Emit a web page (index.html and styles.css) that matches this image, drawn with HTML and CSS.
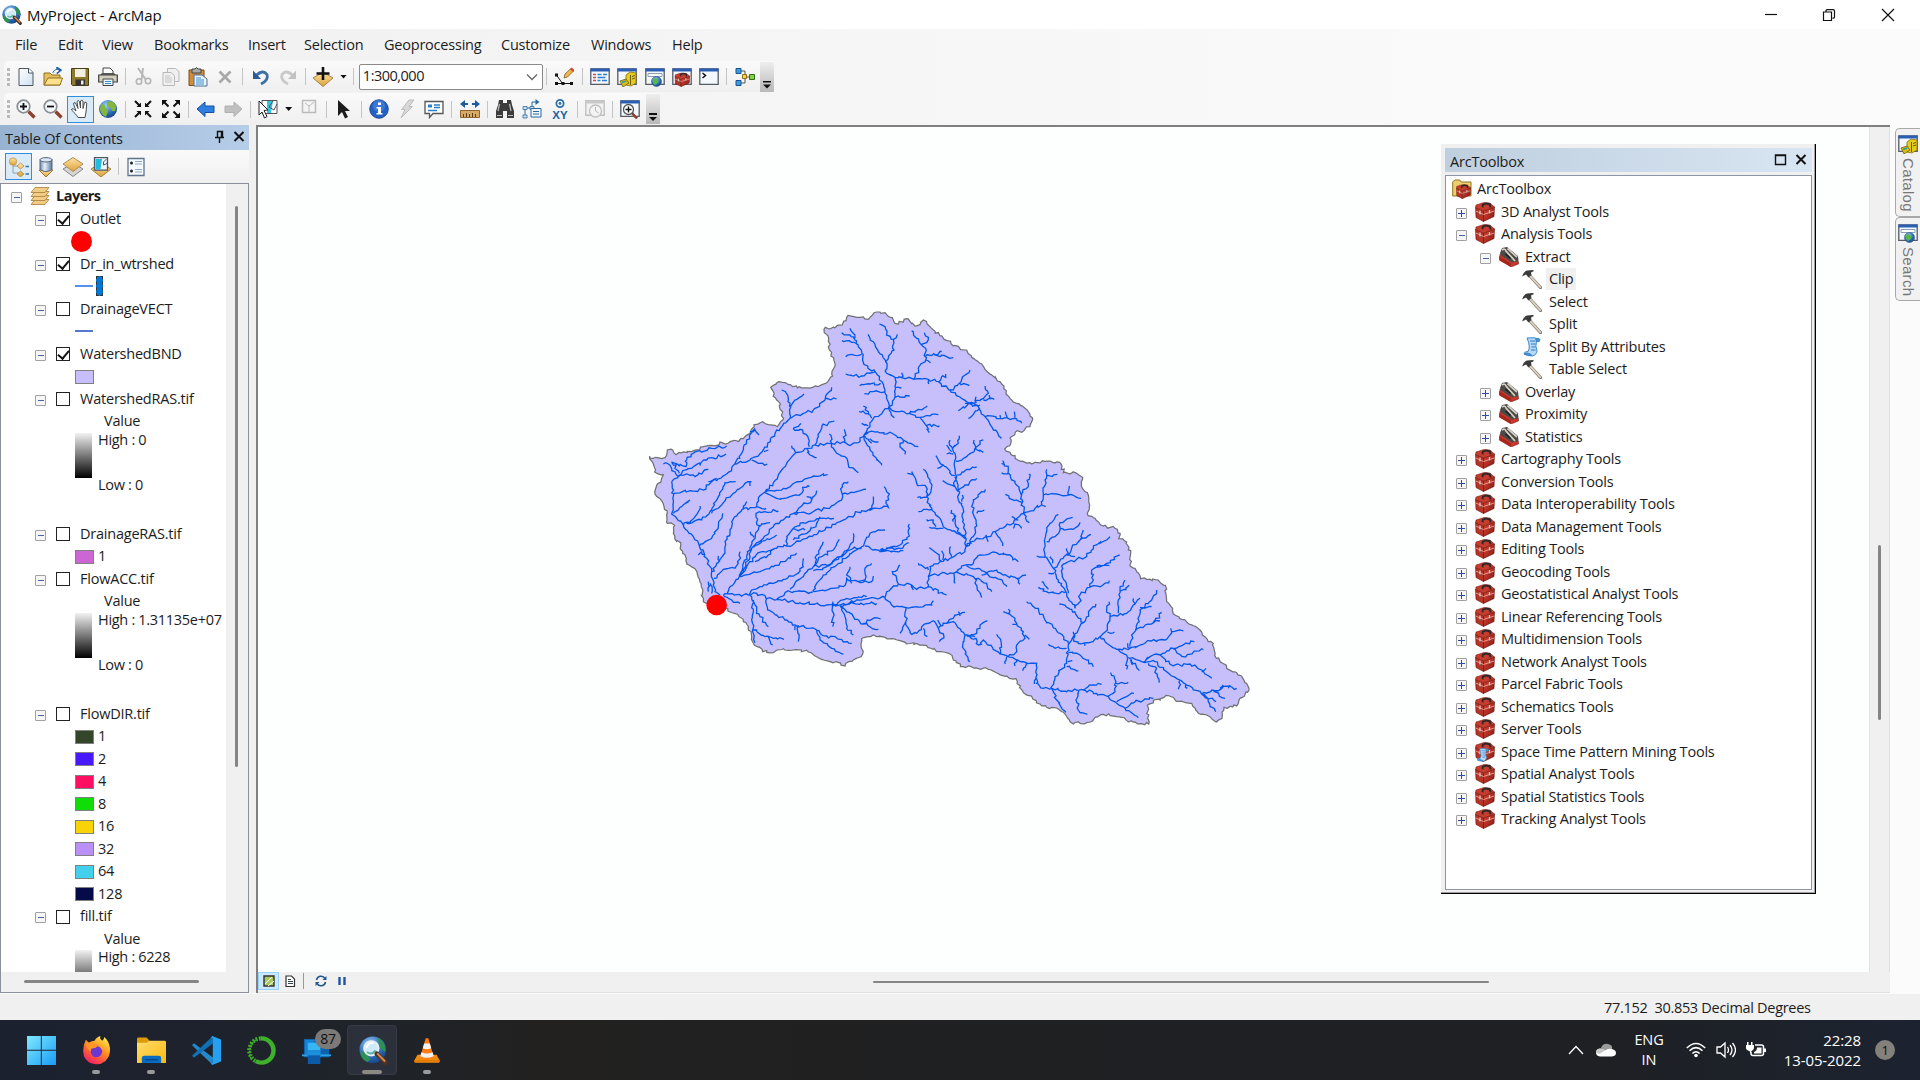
FILE: index.html
```html
<!DOCTYPE html>
<html lang="en">
<head>
<meta charset="utf-8">
<title>MyProject - ArcMap</title>
<link rel="stylesheet" href="styles.css">
</head>
<body>
<svg class="defs" width="0" height="0">
  <defs>
    <linearGradient id="gRed" x1="0" y1="0" x2="1" y2="1"><stop offset="0" stop-color="#d84a3a"/><stop offset="1" stop-color="#8c140e"/></linearGradient>
    <linearGradient id="gGold" x1="0" y1="0" x2="0" y2="1"><stop offset="0" stop-color="#ffe3a4"/><stop offset="1" stop-color="#dba23c"/></linearGradient>
    <linearGradient id="gPaper" x1="0" y1="0" x2="1" y2="1"><stop offset="0" stop-color="#fff"/><stop offset="1" stop-color="#cfe0f2"/></linearGradient>
    <radialGradient id="gGlobe" cx=".4" cy=".3" r=".8"><stop offset="0" stop-color="#9fd0f5"/><stop offset=".6" stop-color="#2a68b8"/><stop offset="1" stop-color="#123a78"/></radialGradient>
    <linearGradient id="gWin" x1="0" y1="0" x2="1" y2="1"><stop offset="0" stop-color="#7deaff"/><stop offset="1" stop-color="#1a9bf6"/></linearGradient>
    <linearGradient id="gFox" x1=".8" y1="0" x2=".2" y2="1"><stop offset="0" stop-color="#fff04c"/><stop offset=".45" stop-color="#ff8a1e"/><stop offset="1" stop-color="#f5156c"/></linearGradient>
    <linearGradient id="gFold" x1="0" y1="0" x2="1" y2="1"><stop offset="0" stop-color="#ffdd6c"/><stop offset="1" stop-color="#fbb910"/></linearGradient>
    <linearGradient id="gCyl" x1="0" y1="0" x2="1" y2="0"><stop offset="0" stop-color="#6f8cb0"/><stop offset=".4" stop-color="#e8f0fa"/><stop offset="1" stop-color="#5b779c"/></linearGradient>

    <symbol id="arcmap" viewBox="0 0 20 20"><circle cx="9.5" cy="9.5" r="9.2" fill="url(#gGlobe)"/><path d="M1 11c3-1 4 1 7 5l-2 2C3 17 1 14 1 11zM13 1c4 2 6 6 5 10l-4-3z" fill="#2f8f54"/><circle cx="8.5" cy="8.5" r="5" fill="#cfeaf8" stroke="#e8eef2" stroke-width="1.3"/><path d="M5 8q2-4 5-3" stroke="#fff" fill="none" stroke-width="1.4"/><path d="M5.500 11q3 2.500 6-1" stroke="#5cb4a8" fill="none" stroke-width="1.400"/><path d="M12.3 12.3l6 6" stroke="#4f3220" stroke-width="3.2" stroke-linecap="round"/><path d="M12.5 12l5.5 5.6" stroke="#d58b57" stroke-width="1.4"/></symbol>
    <symbol id="new" viewBox="0 0 20 20"><path d="M3 1.5h10l4 4v13H3z" fill="url(#gPaper)" stroke="#4c5560"/><path d="M12.5 1.5v4.5h4.5" fill="#fff" stroke="#4c5560"/></symbol>
    <symbol id="open" viewBox="0 0 20 20"><path d="M1 18V6h6l2 2h8v10z" fill="#e4bf60" stroke="#8f6e1e"/><path d="M1 18l4-7h14.5L17 18z" fill="#ffe08a" stroke="#8f6e1e"/><path d="M10 6q2-4 6-3M14 .5l4 2.5-3.5 3z" stroke="#1c5c9c" stroke-width="1.5" fill="#1c5c9c"/><path d="M10 6q2-4 6-3l-1 2z" fill="#f5f5f5"/></symbol>
    <symbol id="save" viewBox="0 0 20 20"><path d="M1.5 1.5h17v17h-16l-1-1z" fill="#8d7a2a" stroke="#4a3f14"/><path d="M5 2h10.5v8H5z" fill="#f2efe0"/><path d="M5.500 12.500h9.500v6H5.500z" fill="#333"/><path d="M11 13.500h2.500v4H11z" fill="#eee"/></symbol>
    <symbol id="print" viewBox="0 0 20 20"><path d="M5 8V1h7l3 3v4z" fill="#fff" stroke="#444"/><path d="M.7 8h18.600v7H.7z" fill="#d3cfbd" stroke="#3f3f3f" stroke-width="1.200"/><path d="M2 8h16l-2-2H4z" fill="#555"/><path d="M5 12h10v6.500H5z" fill="#e8f4fc" stroke="#444"/><path d="M7 14.500h6M7 16.500h6" stroke="#3a93c8"/></symbol>
    <symbol id="cut" viewBox="0 0 20 20"><path d="M5 1l8 12M10 1L8.500 13" stroke="#b8b8b8" stroke-width="2"/><circle cx="6" cy="14.500" r="2.700" fill="none" stroke="#b4b4b4" stroke-width="1.600"/><circle cx="15" cy="14" r="2.700" fill="none" stroke="#b4b4b4" stroke-width="1.600"/></symbol>
    <symbol id="copy" viewBox="0 0 20 20"><g fill="#f0f0f0" stroke="#b9b9b9"><path d="M6.500 1.500h8l3.500 3v10H6.500z"/><path d="M2 5.500h8l3.500 3V18.500H2z"/></g><path d="M4 9h5M4 11h7M4 13h7M4 15h7" stroke="#c4c4c4"/></symbol>
    <symbol id="paste" viewBox="0 0 20 20"><path d="M1 3h15v15.500H1z" fill="#d28d3c" stroke="#7c4d17"/><path d="M4 2h3l1.500-1.500L10 2h3v4H4z" fill="#aaa" stroke="#444"/><path d="M6 8h8l5 4v7H6z" fill="#e9f4ff" stroke="#516f92"/><path d="M8 11h5M8 13h8M8 15h8M8 17h8" stroke="#3a8fd0"/></symbol>
    <symbol id="del" viewBox="0 0 20 20"><path d="M4.500 4.500l11 11M15.500 4.500l-11 11" stroke="#a9a9a9" stroke-width="2.800"/></symbol>
    <symbol id="undo" viewBox="0 0 20 20"><path d="M5 8.500Q12 2 16 7.500 18 13 10 17" fill="none" stroke="#3d6fa5" stroke-width="2.800"/><path d="M2 3.500v8.500h8z" fill="#2a5c92"/></symbol>
    <symbol id="redo" viewBox="0 0 20 20"><path d="M15 8.500Q8 2 4 7.500 2 13 10 17" fill="none" stroke="#c9c9c9" stroke-width="2.800"/><path d="M18 3.500v8.500h-8z" fill="#c2c2c2"/></symbol>
    <symbol id="add" viewBox="0 0 20 20"><path d="M0 11l10-6 10 6-10 8.500z" fill="url(#gGold)" stroke="#a5834a"/><path d="M10 0v13M3.500 6.500h13" stroke="#111" stroke-width="2.600"/></symbol>
    <symbol id="editor" viewBox="0 0 20 20"><path d="M2.500 8l6 8.500h9M2.500 16.500h6" stroke="#111" fill="none"/><path d="M1 6.500h3v3H1zM1 15h3v3H1zM7.500 15h3v3h-3zM16 15h3v3h-3z" fill="#111"/><path d="M10 11l1-4 6-5.500 2.500 2.500-6 6z" fill="#f2b64a" stroke="#80602a" stroke-width=".8"/><path d="M16 2.500l1.500-2 3 2.500-1.500 2z" fill="#d24a3a"/></symbol>
    <symbol id="win" viewBox="0 0 20 20"><path d="M.8 1.800h18.400v15.500H.8z" fill="#f4f7fb" stroke="#555c66" stroke-width="1.300"/><path d="M.5 1.500h19v3H.5z" fill="#2a5fb4"/></symbol>
    <symbol id="toc" viewBox="0 0 20 20"><use href="#win"/><path d="M3 7.500h3M3 10.500h3M3 13.500h3" stroke="#d84a3c" stroke-width="1.400"/><path d="M7.500 7.500h4M13 7.500h4M7.500 10.500h8M7.500 13.500h3M12 13.500h5" stroke="#2e7fd0" stroke-width="1.400"/></symbol>
    <symbol id="catalog" viewBox="0 0 20 20"><use href="#win"/><path d="M9 8l4-3 6 1v10l-5 3-5-1z" fill="#e6cc1c" stroke="#85700c" stroke-width=".8"/><path d="M13.500 8v10M15 9.500l3-1M15 12l3-1" stroke="#6f5c0a"/><path d="M3 14l6-2 3 4-6 4z" fill="#d8bc18" stroke="#6f5c0a" stroke-width=".8"/><path d="M5 15.500l4-1.500" stroke="#28a0a8" stroke-width="1.500"/></symbol>
    <symbol id="search" viewBox="0 0 20 20"><use href="#win"/><path d="M3 6.500h14v3H3z" fill="#fff" stroke="#8ba0b8"/><circle cx="11.500" cy="14.500" r="5" fill="url(#gGlobe)" stroke="#285a90" stroke-width=".6"/><path d="M8 12q4-2 5 1t-3 5q-3-2-2-6z" fill="#58b848"/></symbol>
    <symbol id="tbx" viewBox="0 0 20 20"><path d="M.5 5.500l8 3.500v10.500L1 15.500z" fill="#b83226" stroke="#6c120c" stroke-width=".6"/><path d="M8.500 9l11-4-.5 9.500-10.500 5z" fill="url(#gRed)" stroke="#5a0d08" stroke-width=".6"/><path d="M.5 5.500L1 3l8-2.500 6 .5 4.500 4-11 4z" fill="#c83c2e" stroke="#6c120c" stroke-width=".5"/><path d="M6.500 4.500L7 2l4-1.500 4.500 1L16.500 5l-1.800.7-.7-2.500-3-.6-2.500 1V6z" fill="#2a2a2a"/><path d="M.8 9l7.700 3.500L19.300 9" stroke="#f0a496" fill="none" stroke-width=".9"/><path d="M5 8.500v5M14.500 8v4" stroke="#d8d4d0" stroke-width="1.200"/><path d="M4.200 13h1.700M13.700 12h1.700" stroke="#333"/></symbol>
    <symbol id="winbox" viewBox="0 0 20 20"><use href="#win"/><g transform="translate(2.500 5.500) scale(.78 .72)"><use href="#tbx" width="20" height="20"/></g></symbol>
    <symbol id="python" viewBox="0 0 20 20"><use href="#win"/><path d="M3.500 6l3 2.500-3 2.500" stroke="#111" fill="none" stroke-width="1.500"/></symbol>
    <symbol id="model" viewBox="0 0 20 20"><path d="M6 4h4v6M6 16h4v-6h5" fill="none" stroke="#555"/><path d="M1 1.500h5v5H1zM1 13.500h5v5H1z" fill="#3f9be0" stroke="#175290"/><path d="M7.500 7.500h4v4h-4z" fill="#ffd24a" stroke="#8c6c10"/><path d="M14.500 7.500h5v5h-5z" fill="#8bd04a" stroke="#2f6f1a"/></symbol>

    <symbol id="lens" viewBox="0 0 20 20"><path d="M12.500 12.500l6 6" stroke="#8c4030" stroke-width="3.300"/><circle cx="7.500" cy="7.500" r="6.300" fill="#f5f8fa" stroke="#8a8f94" stroke-width="1.700"/></symbol>
    <symbol id="zin" viewBox="0 0 20 20"><use href="#lens"/><path d="M7.500 4v7M4 7.500h7" stroke="#111" stroke-width="1.800"/></symbol>
    <symbol id="zout" viewBox="0 0 20 20"><use href="#lens"/><path d="M4 7.500h7" stroke="#111" stroke-width="1.800"/></symbol>
    <symbol id="pan" viewBox="0 0 20 20"><path d="M8 18.500C6 15 4 13.500 1.500 11q0-2 2-1L6 12 3.500 5q0-2 2-1L8 9.500 7 2.500q1-2 2.500 0l1 6.500V2q1.500-1.500 2.500 0v7.500l1.500-6q2-1 2.300.7L16 13l-1 5.500z" fill="#fff" stroke="#4a4a4a"/></symbol>
    <symbol id="globe" viewBox="0 0 20 20"><circle cx="10" cy="10" r="9" fill="url(#gGlobe)"/><path d="M9 3q5-2 8 2 2 4 0 7-3 1-4-2T9 8zM3 5q4 0 4 3l3 4-2 6Q3 16 2 10z" fill="#83b83c"/></symbol>
    <symbol id="fin" viewBox="0 0 20 20"><path d="M2 2l5 5M18 2l-5 5M2 18l5-5M18 18l-5-5" stroke="#111" stroke-width="2"/><path d="M8 8V3.500L3.500 8zM12 8V3.500L16.500 8zM8 12v4.500L3.500 12zM12 12v4.500l4.500-4.500z" fill="#111"/></symbol>
    <symbol id="fout" viewBox="0 0 20 20"><path d="M3 3l4.500 4.500M17 3l-4.500 4.500M3 17l4.500-4.500M17 17l-4.500-4.500" stroke="#111" stroke-width="2"/><path d="M1 1h5.500L1 6.500zM19 1h-5.500l5.500 5.500zM1 19h5.500L1 13.500zM19 19h-5.500l5.500-5.500z" fill="#111"/></symbol>
    <symbol id="back" viewBox="0 0 20 20"><path d="M1 10l8-7v4h9v6.500H9v4z" fill="#2f7fe0" stroke="#174f9a"/></symbol>
    <symbol id="fwd" viewBox="0 0 20 20"><path d="M19 10l-8-7v4H2v6.500h9v4z" fill="#c0c0c0" stroke="#b0b0b0"/></symbol>
    <symbol id="sel" viewBox="0 0 20 20"><path d="M4 1.500h15v13H4z" fill="#fff" stroke="#555"/><path d="M9 2h6l-2 12H9z" fill="#35c4e4"/><path d="M15 2l-4 6 5 3 3-6" fill="none" stroke="#555"/><path d="M1 2l9 9-4 .5 3 6-2.500 1.500-2.500-6L1 16z" fill="#fff" stroke="#222"/></symbol>
    <symbol id="clear" viewBox="0 0 20 20"><path d="M3.500 1.500h13v12h-13z" fill="#f4f4f4" stroke="#bbb" stroke-width="1.500"/><path d="M6 4l4 3v6M10 7l5-4" fill="none" stroke="#bbb"/></symbol>
    <symbol id="ptr" viewBox="0 0 20 20"><path d="M4 1l12 11h-5l3 6-3 1.500-3-6.500-4 4z" fill="#1c1c1c"/></symbol>
    <symbol id="info" viewBox="0 0 20 20"><circle cx="10" cy="10" r="9.300" fill="#2260c4" stroke="#153f88" stroke-width=".8"/><circle cx="10" cy="7" r="6" fill="#5590e4" opacity=".5"/><path d="M9 3.500h3v2.500H9zM7.500 8H12v6h1.500v1.500h-6V14H9V9.500H7.500z" fill="#fff"/></symbol>
    <symbol id="bolt" viewBox="0 0 20 20"><path d="M12 1h5l-5 6.500h3.500L4 19l4-8.500H4.500z" fill="#d8d8d8" stroke="#bcbcbc"/></symbol>
    <symbol id="popup" viewBox="0 0 20 20"><path d="M1 2.500h18v12H9L5.500 18.500v-4H1z" fill="#fff" stroke="#555" stroke-width="1.300"/><path d="M4 5.500h4v3H4z" fill="#2980c8"/><path d="M10 6h6M10 8.500h6M4 11.500h9" stroke="#2980c8" stroke-width="1.300"/></symbol>
    <symbol id="measure" viewBox="0 0 20 20"><path d="M0 5l5-4v8zM20 5l-5-4v8z" fill="#1c5c9c"/><path d="M4 5h4M12 5h4" stroke="#1c5c9c" stroke-width="2"/><path d="M.5 11.500h19v7H.5z" fill="#d8a866" stroke="#8c6530"/><path d="M3.500 18v-3M6.500 18v-4M9.500 18v-3M12.500 18v-4M15.500 18v-3" stroke="#5a3e18"/></symbol>
    <symbol id="find" viewBox="0 0 20 20"><path d="M4 1h4v3h4V1h4l1 5 2 6v7h-7v-7H8v7H1v-7l2-6z" fill="#3c3c3c"/><path d="M4.500 5L3 12M14.500 5l1.500 7M2 16.500h5M13 16.500h5" stroke="#bdbdbd" stroke-width="1.200"/></symbol>
    <symbol id="route" viewBox="0 0 20 20"><path d="M3 18V9h7V3h6" fill="none" stroke="#2b6a9e"/><path d="M13.500 0v6l4-3z" fill="#2b6a9e"/><path d="M1 7.500h4v3H1zM1 16h4v3H1zM8 7.500h4v3H8z" fill="#cfe4f5" stroke="#2b6a9e" stroke-width=".8"/><path d="M9 9.500h10V18H9z" fill="#eef6fc" stroke="#2b6a9e"/><path d="M11 12.500h6M11 15h6" stroke="#2b6a9e"/></symbol>
    <symbol id="xy" viewBox="0 0 20 20"><circle cx="10" cy="4.500" r="3.600" fill="#fff" stroke="#2a6ca8" stroke-width="1.800"/><circle cx="10" cy="4.500" r="1.400" fill="#2a6ca8"/><text x="10" y="19.500" text-anchor="middle" font-family="Liberation Sans, Arial, sans-serif" font-weight="bold" font-size="11.500" letter-spacing="0" fill="#1f5f9f">XY</text></symbol>
    <symbol id="time" viewBox="0 0 20 20"><path d="M.8 1.800h18.400v14.500H.8z" fill="#f2f2f2" stroke="#c0c0c0" stroke-width="1.400"/><path d="M.5 1.500h19v3H.5z" fill="#c8c8c8"/><circle cx="10.500" cy="12" r="6" fill="#f4f4f4" stroke="#c0c0c0" stroke-width="1.300"/><path d="M10.500 8v4l3 2" stroke="#bbb" fill="none"/></symbol>
    <symbol id="viewer" viewBox="0 0 20 20"><use href="#win"/><path d="M12 14l5 5.500" stroke="#8c4030" stroke-width="2.600"/><circle cx="8.500" cy="10.500" r="5" fill="#fff" stroke="#555" stroke-width="1.300"/><path d="M8.500 7.500v6M5.500 10.500h6" stroke="#111" stroke-width="1.400"/></symbol>

    <symbol id="t1" viewBox="0 0 20 20"><path d="M4 6v10h6M4 9h6" fill="none" stroke="#9a9a9a"/><circle cx="4" cy="4.500" r="3.700" fill="url(#gGold)" stroke="#c08a30" stroke-width=".7"/><path d="M8 9l3.500-3 3.500 3-3.500 3zM8 17l3.500-3 3.500 3-3.500 3z" fill="url(#gGold)" stroke="#b08030" stroke-width=".7"/><path d="M16.500 9.500h3.500M16.500 17h3.500" stroke="#2f78a8" stroke-width="1.700"/></symbol>
    <symbol id="t2" viewBox="0 0 20 20"><path d="M3 13h14l-7 7z" fill="url(#gGold)" stroke="#9a7430"/><path d="M4 2.500v10q6 4 12 0v-10z" fill="url(#gCyl)" stroke="#54647c"/><ellipse cx="10" cy="2.800" rx="6" ry="2.200" fill="#dde6f0" stroke="#54647c"/></symbol>
    <symbol id="t3" viewBox="0 0 20 20"><path d="M0 12l10-6 10 6-10 7.500z" fill="#d4d4d4" stroke="#888"/><path d="M0 7l10-6.500L20 7l-10 7.500z" fill="url(#gGold)" stroke="#b08c50"/></symbol>
    <symbol id="t4" viewBox="0 0 20 20"><path d="M0 12l10-6 10 6-10 8z" fill="url(#gGold)" stroke="#a98040"/><path d="M3.500.7h13v12.500h-13z" fill="#eef6fc" stroke="#4c5560" stroke-width="1.300"/><path d="M4.500 2h6.500l-1.500 10.500h-5z" fill="#22bce0"/><path d="M15.500 2l-3 3v3l3.500-1.500" fill="none" stroke="#555"/></symbol>
    <symbol id="t5" viewBox="0 0 20 20"><path d="M2 1.500h16v17H2z" fill="#f4f9ff" stroke="#62748c" stroke-width="1.300"/><circle cx="5.500" cy="6" r="1.500" fill="#222"/><circle cx="5.500" cy="14" r="1.500" fill="#222"/><path d="M9 4.500h7M9 7h7M9 12.500h7M9 15h7" stroke="#8ba8cc" stroke-width="1.200"/></symbol>
    <symbol id="layers" viewBox="0 0 20 20"><g fill="#f2cc84" stroke="#a67c38" stroke-width=".8"><path d="M1 18.500l4-5h14l-4 5z"/><path d="M1 14.500l4-5h14l-4 5z"/><path d="M1 10.500l4-5h14l-4 5z"/><path d="M1 6.500l4-5h14l-4 5z"/></g></symbol>
    <symbol id="folderbox" viewBox="0 0 20 20"><path d="M.7 17V3l2-2h5l1.500 2H19v14z" fill="#ecd070" stroke="#8f7322"/><g transform="translate(4 5) scale(.75)"><use href="#tbx" width="20" height="20"/></g></symbol>
    <symbol id="kit" viewBox="0 0 20 20"><path d="M1 7l18.500 7.500v2.500l-7.500 3L.500 13z" fill="#c8382c" stroke="#64100c" stroke-width=".5"/><path d="M0 9l12 7.500V19.500L.5 13.500z" fill="#a8261c"/><path d="M1 6l2-5 5-1 11 9 .5 5-6.500 1.500L2 8.500z" fill="#4a4a46"/><path d="M3 3q3-2 4 1l9 10M8.500 1.500L18 10" stroke="#d4cec4" stroke-width="1.800" fill="none"/><path d="M6.500 7l5 4.500" stroke="#1d1d1d" stroke-width="1.500"/></symbol>
    <symbol id="hammer" viewBox="0 0 20 20"><path d="M7.500 6.500l11 12" stroke="#7c7468" stroke-width="3.200" stroke-linecap="round"/><path d="M7.500 6.500l10.800 11.600" stroke="#d9d0bf" stroke-width="1.900" stroke-linecap="round"/><path d="M0 7.500Q1 3 5 1.500L11 1l1 1-3 1.500.500 2.500L6.500 8.500 4 5.500z" fill="#3b3b3b"/></symbol>
    <symbol id="script" viewBox="0 0 20 20"><path d="M5 1q8-1 12 1-1 2-2.500 2-1.500 6 .5 9.500 0 4-4.500 5.500-6 0-8.500-2 0-2.500 4-2.500Q9 10 5 1z" fill="#b4dafa" stroke="#3a86c8"/><path d="M8 4h5.500M9 7h4.500M9.500 10h4M9 13h4.500" stroke="#3478b8"/><path d="M13.500 2q3-1.500 4.500.5 0 3-3 2zM2 17q4-2.500 8 1.500z" fill="#4a98dc" stroke="#3a86c8"/></symbol>
    <symbol id="tbxs" viewBox="0 0 20 20"><use href="#tbx"/><g transform="translate(1 6) scale(.7)"><use href="#script" width="20" height="20"/></g></symbol>
  </defs>
</svg>

<header class="titlebar">
  <svg class="i20"><use href="#arcmap"/></svg><span class="title">MyProject - ArcMap</span>
  <svg class="winctl" viewBox="0 0 140 20"><g fill="none" stroke="#111" stroke-width="1.200"><path d="M5 9.500h12"/><path d="M63.500 7h8v8.500h-8zM66 7V5.600q0-1 1-1h6q1.500 0 1.500 1.500v6q0 1-1 1h-1"/><path d="M122 4l12 12M134 4l-12 12"/></g></svg>
</header>

<nav class="menubar"><span>File</span><span>Edit</span><span>View</span><span>Bookmarks</span><span>Insert</span><span>Selection</span><span>Geoprocessing</span><span>Customize</span><span>Windows</span><span>Help</span></nav>

<section class="toolbars">
  <div class="toolbar">
    <i class="grip"></i>
    <b><svg><use href="#new"/></svg></b><b><svg><use href="#open"/></svg></b><b><svg><use href="#save"/></svg></b><b><svg><use href="#print"/></svg></b><i class="sep"></i>
    <b><svg><use href="#cut"/></svg></b><b><svg><use href="#copy"/></svg></b><b><svg><use href="#paste"/></svg></b><b><svg><use href="#del"/></svg></b><i class="sep"></i>
    <b><svg><use href="#undo"/></svg></b><b><svg><use href="#redo"/></svg></b><i class="sep"></i>
    <b><svg><use href="#add"/></svg></b><i class="drop"></i><i class="sep"></i>
    <div class="combo"><span>1:300,000</span><svg viewBox="0 0 12 8"><path d="M1 1.500l5 5 5-5" fill="none" stroke="#666" stroke-width="1.300"/></svg></div><i class="sep"></i>
    <b><svg><use href="#editor"/></svg></b><i class="sep"></i>
    <b><svg><use href="#toc"/></svg></b><b><svg><use href="#catalog"/></svg></b><b><svg><use href="#search"/></svg></b><b><svg><use href="#winbox"/></svg></b><b><svg><use href="#python"/></svg></b><i class="sep"></i>
    <b><svg><use href="#model"/></svg></b><i class="more"></i>
  </div>
  <div class="toolbar">
    <i class="grip"></i>
    <b><svg><use href="#zin"/></svg></b><b><svg><use href="#zout"/></svg></b><b class="on"><svg><use href="#pan"/></svg></b><b><svg><use href="#globe"/></svg></b><i class="sep"></i>
    <b><svg><use href="#fin"/></svg></b><b><svg><use href="#fout"/></svg></b><i class="sep"></i>
    <b><svg><use href="#back"/></svg></b><b><svg><use href="#fwd"/></svg></b><i class="sep"></i>
    <b><svg><use href="#sel"/></svg></b><i class="drop"></i><b><svg><use href="#clear"/></svg></b><i class="sep"></i>
    <b><svg><use href="#ptr"/></svg></b><i class="sep"></i>
    <b><svg><use href="#info"/></svg></b><b><svg><use href="#bolt"/></svg></b><b><svg><use href="#popup"/></svg></b><i class="sep"></i>
    <b><svg><use href="#measure"/></svg></b><i class="sep"></i>
    <b><svg><use href="#find"/></svg></b><b><svg><use href="#route"/></svg></b><b><svg><use href="#xy"/></svg></b><i class="sep"></i>
    <b><svg><use href="#time"/></svg></b><i class="sep"></i>
    <b><svg><use href="#viewer"/></svg></b><i class="more"></i>
  </div>
</section>

<main class="work">
  <aside class="toc">
    <div class="toc-head"><span>Table Of Contents</span>
      <svg viewBox="0 0 32 14"><path d="M3.500 7.500V1.500h5v6M7.500 1.500v6M1 7.500h9M5.500 8v5" fill="none" stroke="#111" stroke-width="1.400"/><path d="M20.500 2l9 9M29.500 2l-9 9" stroke="#111" stroke-width="2"/></svg></div>
    <div class="toc-tools"><b class="on"><svg><use href="#t1"/></svg></b><b><svg><use href="#t2"/></svg></b><b><svg><use href="#t3"/></svg></b><b><svg><use href="#t4"/></svg></b><i class="sep"></i><b><svg><use href="#t5"/></svg></b></div>
    <div class="toc-box">
      <div class="toc-tree">
        <div class="row root"><i class="ex"></i><svg><use href="#layers"/></svg><strong>Layers</strong></div>
        <div class="row"><i class="ex"></i><i class="ck y"></i><span>Outlet</span></div>
        <div class="row sym"><i class="dot"></i></div>
        <div class="row"><i class="ex"></i><i class="ck y"></i><span>Dr_in_wtrshed</span></div>
        <div class="row sym"><i class="line"></i><i class="edit"></i></div>
        <div class="row"><i class="ex"></i><i class="ck"></i><span>DrainageVECT</span></div>
        <div class="row sym"><i class="line dark"></i></div>
        <div class="row"><i class="ex"></i><i class="ck y"></i><span>WatershedBND</span></div>
        <div class="row sym"><i class="sw c-bnd"></i></div>
        <div class="row"><i class="ex"></i><i class="ck"></i><span>WatershedRAS.tif</span></div>
        <div class="row val">Value</div>
        <div class="ramp"><i></i><div><span>High : 0</span><span>Low : 0</span></div></div>
        <div class="row"><i class="ex"></i><i class="ck"></i><span>DrainageRAS.tif</span></div>
        <div class="row sym"><i class="sw c-dr"></i>1</div>
        <div class="row"><i class="ex"></i><i class="ck"></i><span>FlowACC.tif</span></div>
        <div class="row val">Value</div>
        <div class="ramp"><i></i><div><span>High : 1.31135e+07</span><span>Low : 0</span></div></div>
        <div class="row"><i class="ex"></i><i class="ck"></i><span>FlowDIR.tif</span></div>
        <div class="row sym"><i class="sw c1"></i>1</div>
        <div class="row sym"><i class="sw c2"></i>2</div>
        <div class="row sym"><i class="sw c4"></i>4</div>
        <div class="row sym"><i class="sw c8"></i>8</div>
        <div class="row sym"><i class="sw c16"></i>16</div>
        <div class="row sym"><i class="sw c32"></i>32</div>
        <div class="row sym"><i class="sw c64"></i>64</div>
        <div class="row sym"><i class="sw c128"></i>128</div>
        <div class="row"><i class="ex"></i><i class="ck"></i><span>fill.tif</span></div>
        <div class="row val">Value</div>
        <div class="ramp"><i></i><div><span>High : 6228</span></div></div>
      </div>
      <div class="vs"><i></i></div>
      <div class="hs"><i></i></div>
    </div>
  </aside>

  <section class="mapframe">
    <div class="canvas">
      <svg class="map" viewBox="0 0 1611 845">
        <g transform="translate(382 173) scale(.33333)">
          <path class="basin rough" d="M29 468 40 475 75 473 82 450 98 450 108 464 130 456 160 452 190 440 230 436 240 426 256 432 310 416 330 400 342 374 368 365 385 374 412 380 428 360 428 336 410 300 392 262 400 256 427 247 458 260 535 260 565 243 578 228 582 182 568 150 566 115 553 98 556 82 584 84 618 62 624 46 650 52 685 58 692 50 710 36 735 38 765 70 790 66 803 56 825 78 840 74 850 60 870 80 940 138 980 150 995 172 1025 192 1035 208 1080 245 1092 262 1098 282 1120 306 1155 325 1177 353 1170 380 1152 392 1126 396 1114 410 1112 432 1094 447 1142 484 1175 492 1220 483 1250 486 1266 498 1270 518 1310 520 1328 532 1328 566 1342 578 1348 620 1342 640 1390 678 1425 685 1440 700 1436 716 1460 726 1472 760 1470 798 1485 805 1502 836 1550 840 1576 856 1580 905 1598 925 1600 942 1680 990 1702 1018 1720 1030 1724 1066 1760 1106 1790 1118 1820 1150 1827 1170 1800 1195 1790 1218 1752 1222 1746 1255 1730 1266 1700 1245 1675 1240 1655 1210 1620 1204 1578 1186 1522 1216 1526 1272 1480 1266 1430 1250 1390 1243 1340 1268 1300 1272 1270 1236 1250 1224 1220 1222 1150 1178 1132 1144 1100 1128 1045 1108 970 1100 940 1080 936 1066 910 1056 870 1044 780 1022 700 1005 665 1016 668 1062 640 1080 615 1098 585 1086 545 1078 505 1056 430 1046 400 1058 368 1055 340 1030 322 975 290 942 230 915 190 905 184 860 165 806 148 796 128 760 122 728 104 716 104 676 82 670 82 640 60 596 44 576 54 550 70 524 44 516 40 492 29 468"/>
          <path class="stream rough" d="M605 98 630 105 645 120 650 132 664 150 668 175 684 205 706 216 718 240 735 270 742 300 745 325 763 353M630 85 645 115M606 122 628 122 650 132M617 170 635 163 665 163M617 222 640 228 665 228 705 215M659 257 690 252 722 250M673 281 700 275 735 275M684 103 700 125 715 155 737 185 740 220 765 232 822 238M718 72 735 80 740 105 760 118 762 150 748 165 737 185M772 103 760 118M765 232 765 290 745 325M785 218 785 232M784 264 765 264M809 288 775 288 765 292M815 92 830 115 843 133 857 145 857 180 835 205 822 238M853 98 865 112 860 128 845 133M857 167 885 165 905 155M885 163 940 173M872 188 857 180M822 238 865 238 895 245 930 270 970 298 990 310 1020 315M866 252 866 238M897 245 905 230 917 232 917 222M930 270 960 248 990 210M960 250 988 257M745 325 720 345 700 355 690 380 672 405M745 325 780 335 808 340 840 352 860 378 868 398M808 340 835 328 862 318M840 352 895 344M860 376 898 377M672 405 690 395 760 402 790 420 835 440M790 420 780 430 795 463M672 405 695 430M670 318 685 335 695 355M657 335 685 340M665 370 685 378M672 405 655 428 625 435 610 425 575 430 525 435 505 445 467 458 440 490 415 525 400 548 375 576M690 416 715 426M672 410 690 450 725 496M460 386 480 388 505 415 508 440M483 370 460 388M583 363 545 380 535 410 525 435M568 402 575 430M613 388 615 425M575 430 590 460 615 470 625 495 655 518M500 445 510 465 530 473M455 437 467 458M425 270 440 282 450 310 450 355M492 282 465 300 452 318M575 262 555 300 520 330 450 355 405 400 370 450 330 480 285 492 255 525 215 545 190 570 150 572 100 582M590 297 555 298M345 385 320 420 305 460 285 492M357 405 345 390 330 395M372 455 385 450M335 480 355 490 382 492M260 438 215 445 160 460 140 480 138 500 95 490M70 492 85 492 95 505 115 530 95 545M258 462 200 480 160 500 125 520 115 530M205 508 165 530 140 522 115 528M95 485 118 520M230 535 205 545M95 545 100 600 95 642 130 675 160 710 178 738 200 775 215 815 222 850 225 875 240 885M150 600 125 620 100 640M180 618 178 630 165 650 150 668 130 675M287 545 255 548 235 590 215 630 185 660 140 670M330 558 332 545 315 550 280 580 245 615 215 640M248 640 235 680 215 715 178 738M175 765 185 755 195 765M320 605 305 630 275 665 270 700 255 725 250 765 230 790 215 815M305 630 350 620 378 625M375 576 355 595 350 620M375 576 430 565 480 545 520 528 563 524M375 578 410 595 450 590 485 580 488 562 508 560M415 632 375 635 348 640 355 690 340 720 330 750 310 790 300 830M390 668 365 672 355 690M330 695 342 712M625 545 607 555 605 600 560 625 500 640 460 640 430 660 400 680 370 715 335 745 330 770 310 810 298 830 270 860 262 880M605 583 640 578 678 568M530 572 515 600 485 618 460 640M500 590 515 600M732 560 748 582 738 610 745 622 700 625 665 632 600 665 555 690 500 715 440 738 410 745 370 755 345 770 320 800 300 830M700 590 700 610 688 628M582 655 540 655 490 668 460 685 440 710 440 738M540 650 530 670 500 700 460 720M495 690 460 685M410 705 375 722 340 742M405 745 385 765 345 785M735 690 715 690 680 712 665 740 640 755 600 790 550 825 530 850 518 872M665 740 630 750 600 770 560 800 520 812M808 672 808 708 780 735 720 755 675 738M806 728 780 745 720 750M790 752 720 755M640 700 640 725 610 760 570 795 520 800 490 830 450 868M598 718 580 750 545 770 520 800M550 725 530 765 520 800M470 760 430 785 400 800 360 815 300 830M490 775 490 800 465 825 430 838 400 850 360 860 335 870 328 886M300 755 295 790 285 805 250 808 222 835M235 768 240 785M250 885 328 886M328 886 350 880 378 895 415 898 480 908 560 915 600 915 650 900 735 893M695 790 675 805 675 840 650 845M700 828 695 845 660 848 620 835 610 860 560 870 518 872M630 800 620 825 635 850M410 898 440 875 518 876M710 910 640 910 600 918M580 915 620 895 680 890M780 795 757 815 775 852 740 875 735 893 755 915 795 922 875 915 880 902M775 852 815 855 830 868 862 862M815 855 820 870M862 860 920 885M578 905 578 980M600 918 615 950 620 985 640 1005M600 918 640 950 670 972 715 988M670 970 700 955 722 957M380 895 383 930 410 945 440 960 465 975 500 985 530 990 560 1008 600 1018 635 1030M475 975 475 1025M530 990 540 1020 575 1045 610 1062M465 990 465 978M330 886 345 915 360 950 385 980M340 900 335 960 338 990 345 1028M338 990 375 1010 400 1015 432 1018M385 1010 398 1035M250 885 275 900 300 910M205 845 205 875M210 850 215 880M797 922 797 965 780 1000M797 965 810 998 830 1000 850 975 880 962 895 985 920 970 945 968 975 1005 1005 1010M850 985 862 1010M895 985 912 1010 898 1025M893 960 900 980M920 968 945 945 975 937M955 935 960 948M975 1005 970 1045 990 1085"/>
          <g transform="translate(780 0)">
            <path class="stream rough" d="M195 310 235 320 255 350 275 380 305 415M175 332 205 312M205 355 240 325M205 310 240 302 265 280 255 258M250 300 283 298M268 285 272 298M228 290 230 308M255 350 300 355 340 355 365 370M300 345 302 356M316 335 322 353M343 335 345 353M150 420 155 440 165 480 170 530 175 570 175 600 185 610 190 660 198 700 198 740M178 407 175 430 158 445M140 435 155 455M140 462 160 462M168 483 200 470 225 445 250 420M222 420 228 448 250 457M108 467 130 495 165 527M112 505 130 495M172 525 200 508 230 500M128 542 165 560M165 530 165 560 175 575M230 535 195 555 175 570M187 585 185 605M256 568 220 600 215 620 228 660 226 700 200 738M253 630 230 640M155 630 165 670 180 700 198 715M165 645 160 665M22 520 40 525 50 550 78 560 80 590 95 625 120 655 130 680 170 700 198 715M35 515 40 525M70 508 90 540 93 575 80 590M55 635 95 628M52 592 80 592M88 682 130 685M80 658 100 660 108 680M198 740 230 715 265 710 300 685 340 670 370 640 425 615 430 585 435 540 440 508M198 740 195 755 150 775 120 785 90 800 85 830 85 862M88 743 110 760 125 783M125 752 128 780M152 740 155 770M308 482 325 510 345 550 365 585 370 640M305 518 325 518M305 490 315 495M387 522 385 550 362 585M316 583 335 598 368 608M472 523 440 528M430 585 470 582 505 585 543 595M508 558 505 583M425 615 437 620M370 640 388 668M335 650 355 660M340 685 345 672 365 685M260 705 265 725M285 695 300 715 308 738M55 790 85 810M85 830 120 822 165 818 220 830 260 850 275 875M165 818 185 798 215 795 240 765 290 758 330 765 355 785M310 758 312 765M200 797 245 812 265 825 300 838 320 860M245 825 265 815 290 810 310 825 350 835 378 825M350 835 360 853M162 820 165 850M225 835 232 870 245 893M475 643 450 670 438 700 435 740 435 770 460 805 475 840 500 880 505 895 525 925M518 652 480 668 480 690 465 710 440 725M540 667 520 688 480 685M410 768 435 772M453 770 458 790M460 805 490 775 515 745 540 720 550 690M573 703 540 720M630 710 590 735 560 770 530 778 485 798 492 840 505 880M500 765 525 770M500 745 505 760M445 820 462 820M415 862 440 875 495 878M425 845 445 868M659 765 620 790 575 810 580 840 570 862 540 885 540 905 525 925M628 842 605 858 572 860M590 798 628 797M478 912 515 928 550 968 520 1010 505 1035 500 1090 465 1130 455 1165M588 912 570 930 550 968M380 905 415 925 435 960 480 1000 505 1030M445 1033 465 1045 500 1045M520 1015 535 1030 560 1028 600 1010 620 1030 650 1048 690 1045M520 995 522 1015M555 1038 553 1028M627 905 620 930 630 950 622 990 600 1010M622 996 643 996M628 950 680 940 705 912 720 895M655 940 655 900 660 870 675 840M688 856 662 873M700 895 705 912M770 870 755 900 720 930 712 970 700 1000 690 1040M755 920 720 922M785 937 765 965 705 988M780 962 760 965M683 1030 690 1045 720 1035 745 1022 800 1018 815 995 850 993M812 985 815 1000M650 1048 690 1075 725 1085 765 1085 800 1115 840 1140 880 1170 905 1182 945 1172 970 1160 1010 1165M883 1025 820 1045 780 1065 750 1070 725 1085M910 1048 850 1070 820 1048M780 1065 820 1098 870 1092 905 1110 935 1135M918 1105 905 1115M835 1168 840 1140M862 1165 858 1152M745 1090 765 1100 772 1130 778 1148M905 1182 925 1205 947 1235M910 1182 948 1205M940 1175 975 1195M970 1155 960 1165M990 1155 985 1165M680 1108 682 1075M697 1095 695 1078M690 1078 718 1112M505 1058 540 1065 565 1080 580 1100M500 1100 535 1112M517 1082 503 1085M455 1165 500 1175 545 1168 590 1180 625 1190 650 1210 675 1225 715 1253M455 1165 470 1200 497 1237M548 1170 580 1155 605 1153M537 1172 528 1200 540 1238 562 1243M632 1118 648 1145 645 1175 622 1190M685 1147 648 1150M650 1205 680 1190 702 1180M675 1225 705 1205 760 1195M455 1165 430 1165 410 1150 410 1090 370 1085 325 1070 300 1062 265 1035 250 1020 235 1035 228 1015 200 1008M403 1152 408 1135M316 1092 320 1070M345 1098 350 1078M368 1112 380 1090M325 1070 345 1060 350 1035 375 1015 370 995 350 970 345 955 325 938M310 935 328 942 325 928M388 1018 375 1005M337 973 352 973M290 1003 302 1020 302 1062M200 1008 230 1000 240 975 262 962"/>
          </g>
          <circle cx="230" cy="915" r="31" fill="#f00"/>
        </g>
      </svg>
      <div class="toolbox">
        <div class="tb-head"><span>ArcToolbox</span><svg viewBox="0 0 34 14"><path d="M1.500 2h10v9.500h-10zM1 2.500h11" fill="none" stroke="#111" stroke-width="1.400"/><path d="M22.500 2l9 9M31.500 2l-9 9" stroke="#111" stroke-width="2"/></svg></div>
        <div class="tb-tree">
          <div class="row l0"><svg><use href="#folderbox"/></svg><span>ArcToolbox</span></div>
          <div class="row l1"><i class="ex p"></i><svg><use href="#tbx"/></svg><span>3D Analyst Tools</span></div>
          <div class="row l1"><i class="ex"></i><svg><use href="#tbx"/></svg><span>Analysis Tools</span></div>
          <div class="row l2"><i class="ex"></i><svg><use href="#kit"/></svg><span>Extract</span></div>
          <div class="row l3"><svg><use href="#hammer"/></svg><span class="hot">Clip</span></div>
          <div class="row l3"><svg><use href="#hammer"/></svg><span>Select</span></div>
          <div class="row l3"><svg><use href="#hammer"/></svg><span>Split</span></div>
          <div class="row l3"><svg><use href="#script"/></svg><span>Split By Attributes</span></div>
          <div class="row l3"><svg><use href="#hammer"/></svg><span>Table Select</span></div>
          <div class="row l2"><i class="ex p"></i><svg><use href="#kit"/></svg><span>Overlay</span></div>
          <div class="row l2"><i class="ex p"></i><svg><use href="#kit"/></svg><span>Proximity</span></div>
          <div class="row l2"><i class="ex p"></i><svg><use href="#kit"/></svg><span>Statistics</span></div>
          <div class="row l1"><i class="ex p"></i><svg><use href="#tbx"/></svg><span>Cartography Tools</span></div>
          <div class="row l1"><i class="ex p"></i><svg><use href="#tbx"/></svg><span>Conversion Tools</span></div>
          <div class="row l1"><i class="ex p"></i><svg><use href="#tbx"/></svg><span>Data Interoperability Tools</span></div>
          <div class="row l1"><i class="ex p"></i><svg><use href="#tbx"/></svg><span>Data Management Tools</span></div>
          <div class="row l1"><i class="ex p"></i><svg><use href="#tbx"/></svg><span>Editing Tools</span></div>
          <div class="row l1"><i class="ex p"></i><svg><use href="#tbx"/></svg><span>Geocoding Tools</span></div>
          <div class="row l1"><i class="ex p"></i><svg><use href="#tbx"/></svg><span>Geostatistical Analyst Tools</span></div>
          <div class="row l1"><i class="ex p"></i><svg><use href="#tbx"/></svg><span>Linear Referencing Tools</span></div>
          <div class="row l1"><i class="ex p"></i><svg><use href="#tbx"/></svg><span>Multidimension Tools</span></div>
          <div class="row l1"><i class="ex p"></i><svg><use href="#tbx"/></svg><span>Network Analyst Tools</span></div>
          <div class="row l1"><i class="ex p"></i><svg><use href="#tbx"/></svg><span>Parcel Fabric Tools</span></div>
          <div class="row l1"><i class="ex p"></i><svg><use href="#tbx"/></svg><span>Schematics Tools</span></div>
          <div class="row l1"><i class="ex p"></i><svg><use href="#tbx"/></svg><span>Server Tools</span></div>
          <div class="row l1"><i class="ex p"></i><svg><use href="#tbxs"/></svg><span>Space Time Pattern Mining Tools</span></div>
          <div class="row l1"><i class="ex p"></i><svg><use href="#tbx"/></svg><span>Spatial Analyst Tools</span></div>
          <div class="row l1"><i class="ex p"></i><svg><use href="#tbx"/></svg><span>Spatial Statistics Tools</span></div>
          <div class="row l1"><i class="ex p"></i><svg><use href="#tbx"/></svg><span>Tracking Analyst Tools</span></div>
        </div>
      </div>
    </div>
    <div class="map-vs"><i></i></div>
    <div class="map-hs">
      <b class="on"><svg viewBox="0 0 12 12"><path d="M1 1h10v10H1z" fill="#a8c860" stroke="#333" stroke-width="1.400"/><path d="M2 9l7-7M5 11l6-5" stroke="#fff"/></svg></b>
      <b><svg viewBox="0 0 12 12"><path d="M2 1h5.500L10.500 4v7.500H2z" fill="#fff" stroke="#333" stroke-width="1.200"/><path d="M4 4.500h3M4 6.500h5M4 8.500h5" stroke="#345"/></svg></b>
      <i class="bar"></i>
      <b><svg viewBox="0 0 12 12"><path d="M1.500 5A4.600 4.600 0 0 1 10 3.500M10.500 7A4.600 4.600 0 0 1 2 8.500" fill="none" stroke="#20588c" stroke-width="1.500"/><path d="M11.500 1v4h-4zM.5 11V7h4z" fill="#20588c"/></svg></b>
      <b><svg viewBox="0 0 12 12"><path d="M3.500 2v8M8.500 2v8" stroke="#1e56a0" stroke-width="2.400"/></svg></b>
      <i class="thumb"></i>
    </div>
  </section>

  <aside class="dock">
    <div class="tab cat"><svg><use href="#catalog"/></svg><span>Catalog</span></div>
    <div class="tab"><svg><use href="#search"/></svg><span>Search</span></div>
  </aside>
</main>

<footer class="status"><span>77.152&nbsp; 30.853 Decimal Degrees</span></footer>

<footer class="taskbar">
  <div class="app"><svg viewBox="0 0 30 30"><path d="M0 0h14.300v14.300H0zM15.300 0H30v14.300H15.300zM0 15.300h14.300V30H0zM15.300 15.300H30V30H15.300z" fill="url(#gWin)"/></svg></div>
  <div class="app run"><svg viewBox="0 0 30 30"><path d="M2 9l2-5 3 3q3-2 6-2 2-4 6-5-1 3 2 5 2-2 2-4 5 4 6 12 .5 8-5 13-5 4-11 3Q5 28 2 21 .500 15 2 9z" fill="url(#gFox)"/><path d="M9 15q0-5 6-5 5 1 6 6-1 6-7 6-5-1-5-7z" fill="#6a37d4"/><path d="M4 7q5-1 9 2l4 1q-3 3-7 3-1 1-1 3-5-3-5-9z" fill="#ff9428"/></svg></div>
  <div class="app run"><svg viewBox="0 0 30 30"><path d="M0 3q0-1.500 1.500-1.500H10l3 3.500v5H0z" fill="#dc9b08"/><path d="M0 7h10l3-2h15.500Q30 5 30 6.500V28H0z" fill="url(#gFold)"/><path d="M5 28v-5q0-2.500 2.500-2.500h15Q25 20.500 25 23v5z" fill="#0a6cc0"/><path d="M9 24.500h12" stroke="#054888" stroke-width="1.500" stroke-linecap="round"/></svg></div>
  <div class="app"><svg viewBox="0 0 30 30"><path d="M2 7.500L0 9.500l21 20 1-7z" fill="#2489ca"/><path d="M2 22.500l-2-2L21 .500l1 7z" fill="#1070b3"/><path d="M21 0l9 3.500V26.500L21 30l-1.500-1.500q2 0 2-2v-23q0-2-2-2z" fill="#27a0f2"/></svg></div>
  <div class="app"><svg viewBox="0 0 30 30"><path d="M14 2.500A12.500 12.500 0 1 1 9 26" fill="none" stroke="#3fb02c" stroke-width="4.600"/><path d="M14 2.500A12.500 12.500 0 0 0 9 26" fill="none" stroke="#3fb02c" stroke-width="4.300" stroke-dasharray="1.800 1.500"/><path d="M9 4Q-1 12 5 25" fill="none" stroke="#3fb02c" stroke-width="1.500" stroke-dasharray="1.600 1.700"/></svg></div>
  <div class="app"><svg viewBox="0 0 30 30"><path d="M2 3h26v19H2z" fill="#0c62ac"/><path d="M0 19h30v2H0z" fill="#2b9fe8"/><path d="M3 4h10v15H3z" fill="#1683d8"/><path d="M6 7h13v15H6z" fill="#37b6f4"/><path d="M6 15h13v14H6z" fill="#0d5ba8"/><path d="M6 15h13v5H6z" fill="#1c90dc"/></svg><em>87</em></div>
  <div class="app run active"><svg><use href="#arcmap"/></svg></div>
  <div class="app run"><svg viewBox="0 0 30 30"><path d="M4 20h22l4 7q0 2-2 2H2q-2 0-2-2z" fill="#f28a0c"/><path d="M13.500 1h3L23 23q-8 4-16 0z" fill="#ff7d10"/><path d="M11.700 7h6.600l1.600 5.500q-5 2-9.800 0zM8.500 17q6.500 3 13 0l1.300 4.500q-8 4-15.600 0z" fill="#f1f1f1"/><path d="M0 27h30" stroke="#d06d04"/></svg></div>
  <div class="tray">
    <svg class="chev" viewBox="0 0 16 10"><path d="M1 9l7-7.500L15 9" fill="none" stroke="#fff" stroke-width="1.300"/></svg>
    <svg class="cloud" viewBox="0 0 20 14"><path d="M5 5Q7 0 12 1t4 5l-6 4z" fill="#9a9a9a"/><path d="M4 13.500q-4-.5-4-4T4 5.500q3 0 5 2 3-2.500 7-1.500 4 1 4 4t-4 3.500z" fill="#fff"/><path d="M0 9.500Q0 6 4 5.500q3 0 5 2L3.500 11z" fill="#c8c8c8"/></svg>
    <div class="lang">ENG<br>IN</div>
    <svg class="net" viewBox="0 0 20 16"><g fill="none" stroke="#fff" stroke-width="1.500"><path d="M.8 6Q10-3 19.200 6M3.500 8.800Q10 2.500 16.500 8.800M6.300 11.500Q10 8 13.700 11.500"/></g><circle cx="10" cy="13.500" r="1.800" fill="#fff"/></svg>
    <svg class="vol" viewBox="0 0 20 18"><g fill="none" stroke="#fff" stroke-width="1.300"><path d="M1 6h3.500L9 2v14L4.500 12H1zM11.500 6q2 3 0 6M14 4q4 5 0 10M16.500 2q6 7 0 14"/></g></svg>
    <svg class="bat" viewBox="0 0 20 16"><path d="M9 3h6.500q2 0 2 2v6.500q0 2-2 2H7q-2 0-2-2V10" fill="none" stroke="#fff" stroke-width="1.500"/><path d="M18 6.500h2v3.500h-2zM11 5.500h4.500v6H8V10q3-1 3-4.500zM0 3h1V0h1.500v3H5V0h1.500v3H8v3Q8 8 5.500 9l-1 3-1-3Q0 8 0 6z" fill="#fff"/></svg>
    <div class="clock">22:28<br>13-05-2022</div>
    <em class="note">1</em>
  </div>
</footer>
<script src="app.js"></script>
</body>
</html>
```
FILE: styles.css
```css
* { box-sizing: border-box; }
body { margin: 0; width: 1920px; height: 1080px; overflow: hidden; display: flex; flex-direction: column;
  background: #f0f0f0; color: #1c1c1c; font: 14.5px/20px "Open Sans", "Noto Sans", sans-serif; letter-spacing: -0.22px; }
.defs { position: absolute; }
i, em { font-style: normal; }
b { font-weight: normal; }
svg { display: block; flex: none; }
.i20 { width: 20px; height: 20px; }

.titlebar { height: 29px; flex: none; background: #fff; display: flex; align-items: center; padding-left: 2px; color: #111; }
.title { margin-left: 5px; flex: 1; font-size: 15px; letter-spacing: -.1px; }
.winctl { width: 140px; height: 20px; margin-right: 20px; }

.menubar { height: 32px; flex: none; display: grid; align-items: center; padding-left: 15px;
  grid-template-columns: 43px 44px 52px 94px 56px 80px 117px 90px 81px 60px;
  background: linear-gradient(90deg, #f0f0f0, #fbfbfb 1600px); }

.toolbars { height: 64px; flex: none; background: linear-gradient(90deg, #f0f0f0, #fbfbfb 1600px); }
.toolbar { height: 32px; display: flex; align-items: center; width: 770px; background: linear-gradient(#fafafa, #efefef); border-radius: 4px 0 0 4px; margin-left: 4px; }
.toolbar + .toolbar { width: 656px; }
.toolbar:first-child { height: 31px; margin-bottom: 1px; }
.toolbar b, .toc-tools b { width: 27.4px; height: 27px; display: flex; align-items: center; justify-content: center; flex: none; }
.toolbar svg, .toc-tools svg, .row svg { width: 20px; height: 20px; }
b.on { background: #d9ebf9; border: 1.500px solid #2f8fdc; }
.sep { width: 7.900px; height: 17px; flex: none; background: linear-gradient(#c4c4c4, #c4c4c4) center / 1px 100% no-repeat; }
.grip { width: 3px; height: 18px; margin: 0 2px 0 3px; flex: none; background: repeating-linear-gradient(#b9b9b9 0 3px, transparent 3px 5px); }
.drop { width: 13px; height: 4px; flex: none; background: #111; clip-path: polygon(3px 0, 10px 0, 6.500px 4px); }
.more { width: 14px; height: 30px; margin-left: auto; background: linear-gradient(#eee, #b8b8b8); display: flex; align-items: flex-end; justify-content: center; }
.more::before { content: ""; width: 8px; height: 8px; margin-bottom: 3px; background: #111; clip-path: polygon(0 0, 8px 0, 8px 2px, 0 2px, 0 4px, 8px 4px, 4px 8px, 0 4px); }
.combo { width: 184px; height: 26px; margin-left: 1px; background: #fff; border: 1px solid #8a8a8a; border-radius: 2px; display: flex; align-items: center; justify-content: space-between; padding: 0 4px 2px 3px; flex: none; letter-spacing: -.5px; }
.combo svg { width: 12px; height: 8px; margin: 3px 0 0; }

.work { flex: 1; min-height: 0; display: flex; }
.toc { width: 249px; flex: none; display: flex; flex-direction: column; }
.toc-head { height: 25px; background: linear-gradient(90deg, #98b3d2, #b6cde8); display: flex; align-items: center; justify-content: space-between; padding: 2px 3px 0 5px; }
.toc-head svg { width: 32px; height: 14px; margin-top: -3px; }
.toc-tools { height: 33px; display: flex; align-items: center; padding-left: 5px; background: linear-gradient(#fafafa, #f0f0f0); }
.toc-box { flex: 1; border: 1.500px solid #8b909c; background: #f0f0f0; display: grid; grid-template: 788px 1fr / 225px 1fr; max-height: 811px; }
.toc-tree { background: #fff; overflow: hidden; padding-top: 1px; }
.row { height: 22.500px; display: flex; align-items: center; white-space: nowrap; padding-left: 34px; }
.row.root { padding-left: 10px; }
.row.root svg { margin: 0 6px 0 8px; }
.row.root strong { letter-spacing: -.5px; }
.row.sym { padding-left: 74px; }
.row.val { padding-left: 103px; }
.ex { width: 11px; height: 11px; flex: none; border: 1px solid #a0a0a0; border-radius: 1px; margin-top: 3px; background: linear-gradient(#4a62a8, #4a62a8) center / 6px 1px no-repeat, #f6f6f6; }
.ex.p { background: linear-gradient(#2f4ca0, #2f4ca0) center / 7px 1px no-repeat, linear-gradient(#2f4ca0, #2f4ca0) center / 1px 7px no-repeat, #f6f6f6; }
.ck { width: 14px; height: 14px; border: 1.500px solid #222; margin: 1px 10px 0; background: #fff; flex: none; display: flex; justify-content: center; }
.ck.y::before { content: ""; width: 5px; height: 9px; border: solid #111; border-width: 0 2.500px 2.500px 0; transform: rotate(40deg); }
.dot { width: 21px; height: 21px; border-radius: 50%; background: #f00; margin-left: -4px; }
.line { width: 18px; height: 2px; background: #5690ea; }
.line.dark { background: #5478cc; }
.edit { width: 7px; height: 20px; margin-left: 3px; background: #0078d7; border: 1px dashed #333; }
.sw { width: 19px; height: 14px; border: 1.500px solid #808080; margin: 1px 4px 0 0; flex: none; }
.c-bnd { background: #c7bffb; } .c-dr { background: #cc66d4; }
.c1 { background: #33462a; } .c2 { background: #4818ff; } .c4 { background: #ff0f62; } .c8 { background: #10dd08; }
.c16 { background: #f7d308; } .c32 { background: #bb90f6; } .c64 { background: #42d0ec; } .c128 { background: #050a48; }
.ramp { height: 90px; padding-left: 74px; display: flex; }
.ramp i { width: 17px; height: 45px; background: linear-gradient(#f2f2f2, #000); margin: 0 6px 0 0; }
.ramp span { display: block; height: 45px; line-height: 13px; letter-spacing: -.3px; }
.vs { padding: 22px 0 0 9px; }
.vs i { display: block; width: 2.500px; height: 561px; background: #858585; border-radius: 2px; }
.hs { padding: 8px 0 0 23px; }
.hs i { display: block; width: 175px; height: 2.500px; background: #858585; border-radius: 2px; }

.mapframe { margin-left: 7px; width: 1634px; height: 868px; flex: none; border-left: 2px solid #808080; border-top: 2px solid #808080; display: grid; grid-template: 845px 21px / 1612px 1fr; }
.canvas { position: relative; background: #fdfffe; border-right: 1px solid #e4e4e4; }
.map { width: 1611px; height: 845px; }
.basin { fill: #c7bffb; stroke: #707070; stroke-width: 3.700; }
.stream { fill: none; stroke: #0058e8; stroke-width: 3.900; }
.map-vs { padding: 418px 0 0 8px; border-right: 1px solid #e0e0e0; }
.map-vs i { display: block; width: 2.500px; height: 175px; background: #858585; border-radius: 2px; }
.map-hs { grid-column: 1 / 3; display: flex; align-items: center; border-bottom: 1px solid #e0e0e0; padding-bottom: 2px; }
.map-hs b { width: 21px; height: 18px; display: flex; align-items: center; justify-content: center; }
.map-hs b.on { background: #cbe8ff; border: 1px solid #99d1ff; }
.map-hs svg { width: 12px; height: 12px; }
.map-hs .bar { width: 1px; height: 16px; background: #999; margin: 0 6px 0 3px; }
.thumb { width: 616px; height: 2.500px; margin: 2px 0 0 521px; background: #858585; border-radius: 2px; }

.toolbox { position: absolute; left: 1183px; top: 17px; width: 375px; height: 750px; background: #f0f0f0; border: solid #000; border-width: 0 1px 1px 0; box-shadow: inset -1px -1px #a0a0a0; padding: 4px 3px 3px 4px; display: flex; flex-direction: column; }
.tb-head { height: 24px; background: linear-gradient(90deg, #bfcfde, #d8e5f3); display: flex; align-items: center; justify-content: space-between; padding: 3px 4px 0 5px; }
.tb-head svg { width: 34px; height: 14px; margin-top: -4px; }
.tb-tree { margin-top: 3px; flex: 1; border: 1.500px solid #8b95a4; background: #fff; padding-top: 2px; }
.tb-tree svg { margin: 0 6px 0 8px; }
.tb-tree .l0 { padding-left: 6px; } .tb-tree .l0 svg { margin: 0 5px 0 0; }
.l1 { padding-left: 10px; }
.l2 { padding-left: 34px; }
.l3 { padding-left: 76px; } .tb-tree .l3 svg { margin: 0 4px 0 0; } .l3 span { padding: 0 3px; height: 22px; line-height: 22px; }
.hot { background: #f0f0f0; }

.dock { flex: 1; background: #fbfbfb; padding: 3px 0 0 5px; height: 868px; }
.tab { width: 25px; height: 84px; border: 1px solid #a8a8a8; border-right: 0; border-radius: 5px 0 0 5px; background: #f1f1f1; display: flex; flex-direction: column; align-items: center; padding-top: 5px; }
.tab.cat { height: 89px; }
.tab svg { width: 20px; height: 20px; margin-left: -1px; }
.tab span { writing-mode: vertical-rl; font: 15px/16px "Liberation Sans", Arial, sans-serif; color: #777; margin-top: 4px; letter-spacing: .3px; }

.status { height: 27px; flex: none; display: flex; align-items: center; padding: 2px 0 0 1604px; border-top: 1px solid #fafafa; letter-spacing: -.3px; }

.taskbar { height: 60px; flex: none; display: flex; align-items: center; padding-left: 16px; color: #fff; background: linear-gradient(90deg, #1c2130, #1f2329 20%, #222120 28%, #1e2024 70%, #1e2024 84%, #1c2330); }
.app { width: 50px; height: 50px; margin-right: 5.200px; display: flex; align-items: center; justify-content: center; position: relative; border-radius: 4px; flex: none; }
.app svg { width: 29px; height: 29px; }
.app:nth-child(8) svg { width: 26px; }
.app.active { background: #2c303b; border: 1px solid #373b45; }
.app.active svg { margin-left: 2px; }
.run::after { content: ""; position: absolute; bottom: 1px; left: 21px; width: 8px; height: 4px; border-radius: 2px; background: #9a9a9e; }
.active::after { left: 14px; width: 20px; bottom: 0; background: #8c8985; }
.app em { position: absolute; left: 23px; top: 4px; width: 26px; height: 20px; border-radius: 10px; background: #7c7a78; color: #111; text-align: center; font-size: 14px; }
.tray { margin-left: auto; display: flex; align-items: center; padding-right: 25px; }
.chev { width: 16px; height: 10px; margin-right: 12px; }
.cloud { width: 20px; height: 14px; margin-right: 18px; }
.lang { width: 30px; text-align: center; margin-right: 22px; letter-spacing: -.1px; }
.net { width: 20px; height: 16px; margin-right: 10px; }
.vol { width: 20px; height: 18px; margin-right: 10px; }
.bat { width: 20px; height: 16px; }
.clock { width: 95px; text-align: right; margin-right: 14px; font-size: 15px; letter-spacing: -.1px; }
.note { width: 20px; height: 20px; border-radius: 50%; background: #84807c; color: #111; text-align: center; font-size: 13px; }
```
FILE: app.js
```js
// Breaks each straight run of the hydrology lines into short steps, so rivers and divides look natural.
let seed = 7;
const rnd = () => ((seed = (seed * 16807) % 2147483647) / 2147483647 - 0.5);
document.querySelectorAll('.rough').forEach(path => {
  const out = path.getAttribute('d').split('M').filter(Boolean).map(run => {
    const n = run.trim().split(/\s+/).map(Number);
    const pts = [];
    for (let k = 0; k < n.length; k += 2) pts.push([n[k], n[k + 1]]);
    let d = 'M' + pts[0].join(' ');
    for (let k = 1; k < pts.length; k++) {
      const [ax, ay] = pts[k - 1], [bx, by] = pts[k];
      const steps = Math.max(1, Math.round(Math.hypot(bx - ax, by - ay) / 8));
      for (let s = 1; s < steps; s++) {
        const t = s / steps;
        d += 'L' + (ax + (bx - ax) * t + rnd() * 9).toFixed(1) + ' ' + (ay + (by - ay) * t + rnd() * 9).toFixed(1);
      }
      d += 'L' + bx + ' ' + by;
    }
    return d;
  });
  path.setAttribute('d', out.join(''));
});
```
